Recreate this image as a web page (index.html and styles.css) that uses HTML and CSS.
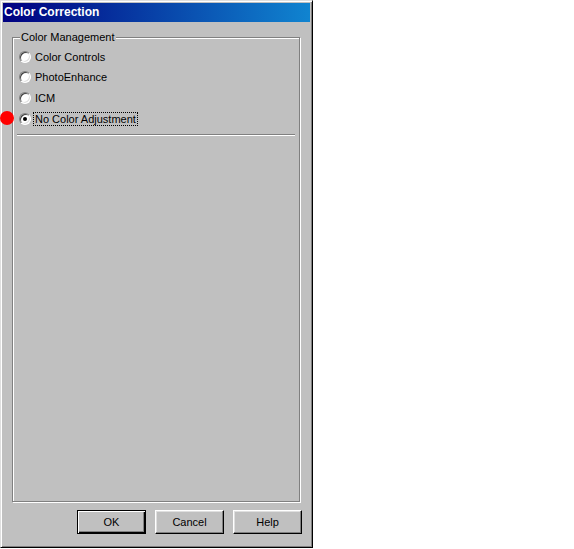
FILE: index.html
```html
<!DOCTYPE html>
<html>
<head>
<meta charset="utf-8">
<link rel="stylesheet" href="styles.css">
</head>
<body>
<div class="window">
  <div class="titlebar">Color Correction</div>
  <div class="content">
    <fieldset class="group">
      <legend>Color Management</legend>
      <div class="options">
        <label class="opt"><span class="radio"></span><span class="txt">Color Controls</span></label>
        <label class="opt"><span class="radio"></span><span class="txt">PhotoEnhance</span></label>
        <label class="opt"><span class="radio"></span><span class="txt">ICM</span></label>
        <label class="opt"><span class="radio checked"></span><span class="txt focus">No Color Adjustment</span></label>
      </div>
      <div class="sep"></div>
    </fieldset>
    <div class="buttons">
      <button class="btn default">OK</button>
      <button class="btn">Cancel</button>
      <button class="btn">Help</button>
    </div>
  </div>
  <span class="marker"></span>
</div>
</body>
</html>
```
FILE: styles.css
```css
html, body { margin: 0; padding: 0; background: #fff; }
body { font-family: "Liberation Sans", Arial, sans-serif; font-size: 11px; color: #000; }

.window {
  position: relative;
  width: 313px;
  height: 548px;
  box-sizing: border-box;
  background: #c0c0c0;
  border: 1px solid;
  border-color: #dfdfdf #000 #000 #dfdfdf;
  box-shadow: inset 1px 1px #fff, inset -1px -1px #808080;
  padding: 2px;
  display: flex;
  flex-direction: column;
}

.titlebar {
  height: 19px;
  line-height: 19px;
  background: linear-gradient(to right, #000080, #1084d0);
  color: #fff;
  font-weight: bold;
  font-size: 12px;
  padding-left: 1px;
}

.content {
  flex: 1;
  display: flex;
  flex-direction: column;
  padding: 9px 10px 11px 9px;
}

.group {
  flex: 1;
  margin: 0;
  padding: 4px 4px 0 4px;
  border: 1px solid #808080;
  box-shadow: inset 1px 1px #fff, 1px 1px #fff;
  min-width: 0;
}

.group legend {
  padding: 0 1px;
  margin-left: 3px;
  background: #c0c0c0;
  line-height: 12px;
}

.options {
  display: flex;
  flex-direction: column;
  padding-left: 2px;
  padding-top: 2px;
}

.opt {
  display: flex;
  align-items: center;
  height: 21px;
  gap: 3px;
}
.opt:first-child { margin-top: -2px; height: 19px; }

.radio {
  width: 12px;
  height: 12px;
  box-sizing: border-box;
  border-radius: 50%;
  background: #fff;
  border: 1px solid;
  border-color: #808080 #fff #fff #808080;
  box-shadow: inset 1px 1px #404040, inset -1px -1px #dfdfdf;
  position: relative;
  flex: none;
}
.radio.checked::after {
  content: "";
  position: absolute;
  left: 3px;
  top: 3px;
  width: 4px;
  height: 4px;
  border-radius: 50%;
  background: #000;
}

.txt { line-height: 12px; padding: 0 1px; }
.focus { outline: 1px dotted #000; }

.sep {
  margin: 5px 0 0 0;
  height: 1px;
  background: #808080;
  border-bottom: 1px solid #fff;
}

.buttons {
  display: flex;
  justify-content: flex-end;
  gap: 9px;
  padding-top: 8px;
  margin-right: -2px;
}

.btn {
  width: 69px;
  height: 24px;
  box-sizing: border-box;
  font-family: "Liberation Sans", Arial, sans-serif;
  font-size: 11px;
  color: #000;
  background: #c0c0c0;
  border: 1px solid;
  border-color: #fff #000 #000 #fff;
  box-shadow: inset -1px -1px #808080, inset 1px 1px #dfdfdf;
  padding: 0;
}
.btn.default {
  border: 1px solid #000;
  box-shadow: inset 1px 1px #fff, inset -1px -1px #000, inset -2px -2px #808080;
}

.marker {
  position: absolute;
  left: -1px;
  top: 110px;
  width: 14px;
  height: 14px;
  border-radius: 50%;
  background: #ff0000;
}
```
